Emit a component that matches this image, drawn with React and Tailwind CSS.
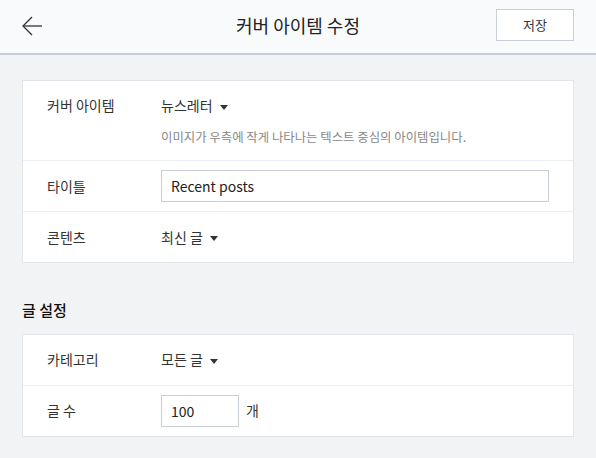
import React from 'react';

const font = { fontFamily: '"Noto Sans CJK KR", "Noto Sans", sans-serif' };

function Caret() {
    return <span className="ml-[7px] inline-block border-x-[4px] border-t-[5px] border-x-transparent border-t-[#333] align-middle" />;
}

function Row({ label, children, className = '' }) {
    return (
        <div className={`flex border-b border-[#eceef2] last:border-b-0 ${className}`}>
            <div className="w-[138px] shrink-0 pl-[24px] text-[14px] text-[#333]">{label}</div>
            <div className="flex-1">{children}</div>
        </div>
    );
}

export default function App() {
    return (
        <div className="min-h-[458px] w-[596px] bg-[#f2f3f5]" style={font}>
            {/* header */}
            <div className="relative flex h-[55px] items-center justify-center border-b-2 border-[#c8ced8] bg-[#f9fafc]">
                <button className="absolute left-[21px] top-[15px] text-[#333]">
                    <svg width="22" height="22" viewBox="0 0 22 22" fill="none" stroke="#333" strokeWidth="1.3">
                        <path d="M21 11H2" />
                        <path d="M11 2L2 11l9 9" />
                    </svg>
                </button>
                <h1 className="mt-[-2px] text-[18px] text-[#222]">커버 아이템 수정</h1>
                <button className="absolute right-[22px] top-[9px] h-[32px] w-[78px] border border-[#c8ced8] bg-white text-[13px] text-[#333]">
                    저장
                </button>
            </div>

            <div className="px-[22px] pt-[25px]">
                <div className="border border-[#e1e5eb] bg-white">
                    <Row label="커버 아이템" className="h-[80px] pt-[14px]">
                        <div className="text-[14px] text-[#333]">
                            뉴스레터<Caret />
                        </div>
                        <div className="mt-[12px] text-[12.4px] text-[#888]">
                            이미지가 우측에 작게 나타나는 텍스트 중심의 아이템입니다.
                        </div>
                    </Row>
                    <Row label="타이틀" className="h-[51px] items-center">
                        <input
                            defaultValue="Recent posts"
                            className="h-[32px] w-[388px] border border-[#c8ced8] px-[9px] text-[14px] text-[#222] outline-none"
                            style={font}
                        />
                    </Row>
                    <Row label="콘텐츠" className="h-[50px] items-center">
                        <div className="text-[14px] text-[#333]">
                            최신 글<Caret />
                        </div>
                    </Row>
                </div>

                <h2 className="mt-[36px] mb-[12px] text-[15px] font-medium text-[#111]">글 설정</h2>

                <div className="border border-[#e1e5eb] bg-white">
                    <Row label="카테고리" className="h-[51px] items-center">
                        <div className="text-[14px] text-[#333]">
                            모든 글<Caret />
                        </div>
                    </Row>
                    <Row label="글 수" className="h-[50px] items-center">
                        <div className="flex items-center">
                            <input
                                defaultValue="100"
                                className="h-[32px] w-[78px] border border-[#c8ced8] px-[9px] text-[14px] text-[#222] outline-none"
                                style={font}
                            />
                            <span className="ml-[7px] text-[14px] text-[#333]">개</span>
                        </div>
                    </Row>
                </div>
            </div>
        </div>
    );
}
